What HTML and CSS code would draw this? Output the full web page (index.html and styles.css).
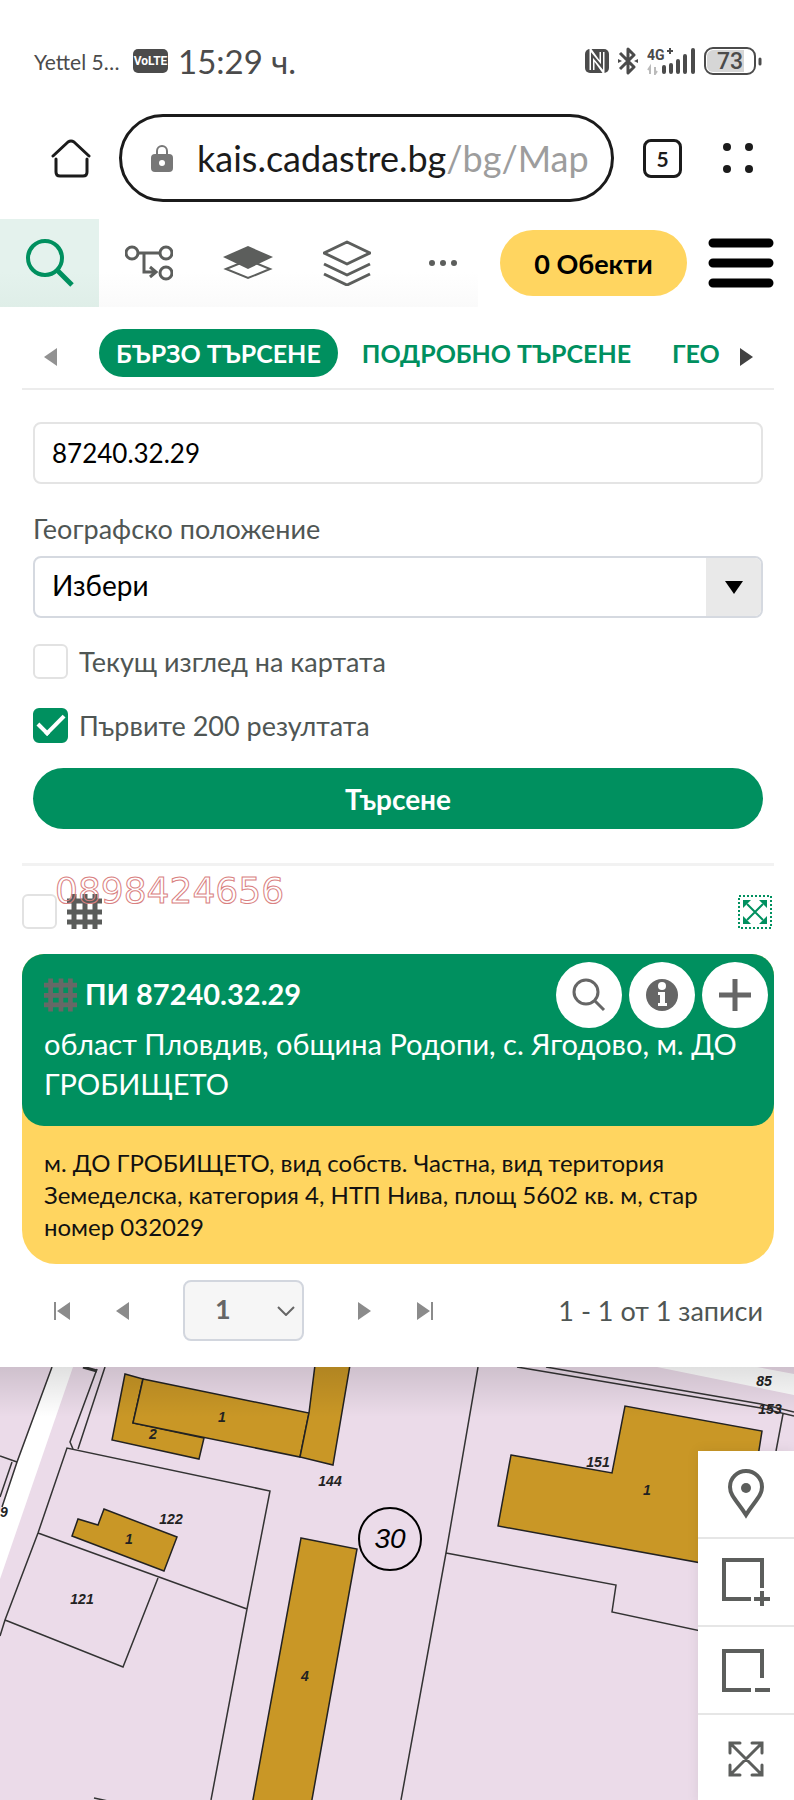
FILE: index.html
```html
<!DOCTYPE html>
<html lang="bg">
<head>
    <meta charset="UTF-8">
    <meta name="viewport" content="width=device-width, initial-scale=1">
    <title>КАИС - Карта</title>
    <link rel="stylesheet" href="styles.css">
</head>
<body>
    <!-- Status bar -->
    <div class="status-bar">
        <span class="carrier">Yettel 5…</span>
        <span class="volte">VoLTE</span>
        <span class="clock">15:29 ч.</span>
        <div class="status-icons">
            <svg width="24" height="26" viewBox="0 0 24 26">
                <rect x="0" y="1" width="24" height="24" rx="5" fill="#4b4b4b"/>
                <path d="M7 22V6l10 14V4" fill="none" stroke="#fff" stroke-width="5"/>
                <path d="M7 24V7l10 12V2" fill="none" stroke="#4b4b4b" stroke-width="2"/>
            </svg>
            <svg width="20" height="28" viewBox="0 0 20 28">
                <path d="M2 6l14 14-6 6V2l6 6L2 22" fill="none" stroke="#4b4b4b" stroke-width="3" stroke-linejoin="round"/>
                <path d="M0 12l4 2-4 2zM20 12l-4 2 4 2z" fill="#4b4b4b"/>
            </svg>
            <svg width="48" height="28" viewBox="0 0 48 28">
                <text x="0" y="13" class="net-label">4G</text>
                <path d="M20 4h6M23 1v6" stroke="#4b4b4b" stroke-width="2"/>
                <path d="M3 27v-7l-2 3M8 20v7l2-3" fill="none" stroke="#bbb" stroke-width="2"/>
                <path d="M17 20v5M24 18v7M31 14v11M38 9v16M46 3v22" stroke="#4b4b4b" stroke-width="4" stroke-linecap="round"/>
            </svg>
            <svg width="58" height="28" viewBox="0 0 58 28">
                <rect x="1" y="1" width="50" height="26" rx="8" fill="#fff" stroke="#4b4b4b" stroke-width="2"/>
                <path d="M9 3h31v22H9a6 6 0 0 1-6-6V9a6 6 0 0 1 6-6z" fill="#d6d6d6"/>
                <path d="M56 12v5" stroke="#4b4b4b" stroke-width="3" stroke-linecap="round"/>
                <text x="26" y="22" text-anchor="middle" class="battery-label">73</text>
            </svg>
        </div>
    </div>

    <!-- Browser bar -->
    <div class="browser-bar">
        <button class="plain" aria-label="Начало">
            <svg width="40" height="40" viewBox="0 0 40 40" fill="none" stroke="#1b1b1b" stroke-width="3" stroke-linecap="round" stroke-linejoin="round">
                <path d="M2 18L17 4q3-2 6 0l15 14M5 21v13q0 4 4 4h23q4 0 4-4V21"/>
            </svg>
        </button>
        <button class="address">
            <svg width="22" height="28" viewBox="0 0 22 28">
                <path d="M6 12V7a5 5 0 0 1 10 0v5" fill="none" stroke="#777" stroke-width="2"/>
                <rect x="0" y="10" width="22" height="18" rx="4" fill="#777"/>
                <circle cx="11" cy="19" r="3" fill="#fff"/>
            </svg>
            <span>kais.cadastre.bg<span class="path">/bg/Map</span></span>
        </button>
        <button class="tab-count">5</button>
        <button class="plain" aria-label="Меню на браузъра">
            <svg width="30" height="30" viewBox="0 0 30 30" fill="#1b1b1b">
                <circle cx="4" cy="4" r="4"/><circle cx="26" cy="4" r="4"/>
                <circle cx="4" cy="26" r="4"/><circle cx="26" cy="26" r="4"/>
            </svg>
        </button>
    </div>

    <!-- Site toolbar -->
    <header class="toolbar">
        <nav class="tools">
            <button class="tool active" aria-label="Търсене">
                <svg width="48" height="48" viewBox="0 0 48 48" fill="none" stroke="#00905f" stroke-width="4">
                    <circle cx="19" cy="19" r="17"/>
                    <path d="M31 31l15 15" stroke-width="5"/>
                </svg>
            </button>
            <button class="tool" aria-label="Маршрут">
                <svg width="48" height="36" viewBox="0 0 48 36" fill="none" stroke="#5c5e5c" stroke-width="3">
                    <circle cx="7" cy="8" r="6"/><circle cx="41" cy="8" r="6"/><circle cx="41" cy="28" r="6"/>
                    <path d="M13 8h22M19 8v19h11M25 22l6 5-6 5"/>
                </svg>
            </button>
            <button class="tool" aria-label="Основна карта">
                <svg width="50" height="34" viewBox="0 0 50 34">
                    <path d="M3 23L25 14l22 9-22 9z" fill="none" stroke="#5c5e5c" stroke-width="2"/>
                    <path d="M0 11L25 0l25 11-25 12z" fill="#5c5e5c"/>
                </svg>
            </button>
            <button class="tool" aria-label="Слоеве">
                <svg width="48" height="46" viewBox="0 0 48 46" fill="none" stroke="#5c5e5c" stroke-width="3" stroke-linejoin="round">
                    <path d="M1 13L24 2l23 11-23 11zM1 24l23 11 23-11M1 34l23 11 23-11"/>
                </svg>
            </button>
            <button class="tool more" aria-label="Още">
                <svg width="30" height="8" viewBox="0 0 30 8" fill="#5c5e5c">
                    <circle cx="4" cy="4" r="3"/><circle cx="15" cy="4" r="3"/><circle cx="26" cy="4" r="3"/>
                </svg>
            </button>
        </nav>
        <button class="objects">0 Обекти</button>
        <button class="plain" aria-label="Меню">
            <svg width="66" height="50" viewBox="0 0 66 50" stroke="#000" stroke-width="9" stroke-linecap="round">
                <path d="M5 5h56M5 25h56M5 45h56"/>
            </svg>
        </button>
    </header>

    <main class="panel">
        <div class="tabs">
            <button class="plain scroll" aria-label="Назад">
                <svg width="13" height="18" viewBox="0 0 13 18"><path d="M13 0v18L0 9z" fill="#929292"/></svg>
            </button>
            <div class="tab-list">
                <button class="tab active">БЪРЗО ТЪРСЕНЕ</button>
                <button class="tab">ПОДРОБНО ТЪРСЕНЕ</button>
                <button class="tab">ГЕО</button>
            </div>
            <button class="plain scroll" aria-label="Напред">
                <svg width="13" height="18" viewBox="0 0 13 18"><path d="M0 0v18l13-9z" fill="#424242"/></svg>
            </button>
        </div>

        <form class="search-form">
            <input type="text" class="field" aria-label="Търсене" value="87240.32.29">
            <label for="location" class="field-label">Географско положение</label>
            <div class="select-wrap">
                <select id="location" class="field">
                    <option>Избери</option>
                </select>
                <span class="select-arrow">
                    <svg width="18" height="13" viewBox="0 0 18 13"><path d="M0 0h18L9 13z"/></svg>
                </span>
            </div>
            <label class="check"><input type="checkbox"> Текущ изглед на картата</label>
            <label class="check"><input type="checkbox" checked> Първите 200 резултата</label>
            <button type="button" class="submit">Търсене</button>
        </form>

        <div class="results-head">
            <input type="checkbox" aria-label="Избери всички">
            <svg width="35" height="35" viewBox="0 0 35 35" stroke="#5a5c5a" stroke-width="5">
                <path d="M7 0v35M18 0v35M28 0v35M0 7h35M0 18h35M0 28h35"/>
            </svg>
            <span class="watermark">0898424656</span>
            <button class="plain extent" aria-label="Покажи всички">
                <svg width="34" height="34" viewBox="0 0 34 34" fill="#00905f" stroke="#00905f">
                    <rect x="1" y="1" width="32" height="32" fill="none" stroke-width="2" stroke-dasharray="2 2"/>
                    <path d="M9 9l16 16M25 9L9 25" stroke-width="2"/>
                    <path d="M5 5h8l-8 8zM29 5v8l-8-8zM5 29v-8l8 8zM29 29h-8l8-8z" stroke="none"/>
                </svg>
            </button>
        </div>

        <article class="result">
            <div class="result-main">
                <div class="result-title">
                    <svg width="33" height="34" viewBox="0 0 35 35" stroke="#666866" stroke-width="5">
                        <path d="M7 0v35M18 0v35M28 0v35M0 7h35M0 18h35M0 28h35"/>
                    </svg>
                    <h2>ПИ 87240.32.29</h2>
                    <div class="result-actions">
                        <button class="round" aria-label="Приближи">
                            <svg width="34" height="34" viewBox="0 0 34 34" fill="none" stroke="#666" stroke-width="3">
                                <circle cx="14" cy="14" r="12"/><path d="M22 22l10 10"/>
                            </svg>
                        </button>
                        <button class="round" aria-label="Информация">
                            <svg width="34" height="34" viewBox="0 0 34 34">
                                <circle cx="17" cy="17" r="16" fill="#666"/>
                                <circle cx="17" cy="8" r="4" fill="#fff"/>
                                <path d="M13 14h7v11h2v3h-9v-3h2v-8h-2z" fill="#fff"/>
                            </svg>
                        </button>
                        <button class="round" aria-label="Добави">
                            <svg width="34" height="34" viewBox="0 0 34 34"><path d="M1 17h32M17 1v32" stroke="#666" stroke-width="5"/></svg>
                        </button>
                    </div>
                </div>
                <p>област Пловдив, община Родопи, с. Ягодово, м. ДО ГРОБИЩЕТО</p>
            </div>
            <p class="result-details">м. ДО ГРОБИЩЕТО, вид собств. Частна, вид територия Земеделска, категория 4, НТП Нива, площ 5602 кв. м, стар номер 032029</p>
        </article>

        <div class="pager">
            <button class="plain" aria-label="Първа">
                <svg width="16" height="18" viewBox="0 0 16 18" fill="#8b8b8b"><path d="M0 0h2v18H0zM16 0v18L3 9z"/></svg>
            </button>
            <button class="plain" aria-label="Предишна">
                <svg width="13" height="18" viewBox="0 0 13 18" fill="#8b8b8b"><path d="M13 0v18L0 9z"/></svg>
            </button>
            <div class="page-select">
                <select aria-label="Страница"><option>1</option></select>
                <svg width="18" height="10" viewBox="0 0 18 10" fill="none" stroke="#666" stroke-width="2"><path d="M1 1l8 8 8-8"/></svg>
            </div>
            <button class="plain" aria-label="Следваща">
                <svg width="13" height="18" viewBox="0 0 13 18" fill="#8b8b8b"><path d="M0 0v18l13-9z"/></svg>
            </button>
            <button class="plain" aria-label="Последна">
                <svg width="16" height="18" viewBox="0 0 16 18" fill="#8b8b8b"><path d="M14 0h2v18h-2zM0 0v18l13-9z"/></svg>
            </button>
            <span class="pager-info">1 - 1 от 1 записи</span>
        </div>
    </main>

    <!-- Cadastral map -->
    <section class="map">
        <svg class="map-canvas" viewBox="0 0 794 433" preserveAspectRatio="xMinYMin slice">
            <!-- roads -->
            <g fill="#fff">
                <path d="M52 0h21L0 212v-67z"/>
                <path d="M657 0h100l37 7v21z"/>
            </g>
            <!-- parcels -->
            <g class="parcels">
                <path d="M52 0L17 95 2 140M0 89l17 6M12 95L0 130"/>
                <path d="M97 2L70 75l3 7M105 0L78 82"/>
                <path d="M83 0l14 4" stroke-width="3"/>
                <path d="M0 269l5-16 33-87 29-85 203 43-23 118-36 191M38 166l209 76M158 211l-35 89L5 253M94 431l14 3"/>
                <path d="M478 0l-32 186-45 247M446 186l170 32-4 27 182 39"/>
                <path d="M517 0l244 41 33 8M546 0l215 37 33 8M783 47l-7 37"/>
            </g>
            <!-- buildings -->
            <g class="buildings">
                <path d="M125 7l-13 66 87 19 5-21-71-15 10-44z"/>
                <path d="M143 12l166 34-9 44-167-34z"/>
                <path d="M315-2l-6 48-9 44 33 8L350-2z"/>
                <path d="M72 169l6-17 20 6 6-16 73 28-13 34z"/>
                <path d="M301 171l56 11-46 256h-59z"/>
                <path d="M511 88l101 18 13-67 137 25-22 139-242-44z"/>
            </g>
            <g class="map-labels">
                <text x="222" y="55">1</text>
                <text x="153" y="72">2</text>
                <text x="330" y="119">144</text>
                <text x="171" y="157">122</text>
                <text x="129" y="177">1</text>
                <text x="82" y="237">121</text>
                <text x="305" y="314">4</text>
                <text x="0" y="150">19</text>
                <text x="764" y="19">85</text>
                <text x="770" y="47">153</text>
                <text x="598" y="100">151</text>
                <text x="647" y="128">1</text>
            </g>
            <circle cx="390" cy="172" r="31" fill="none" stroke="#000" stroke-width="2"/>
            <text x="390" y="181" class="quarter">30</text>
        </svg>
        <div class="map-tools">
            <button aria-label="Местоположение">
                <svg width="36" height="50" viewBox="0 0 36 50">
                    <path d="M18 46C10 33 2 27 2 18a16 16 0 0 1 32 0c0 9-8 15-16 28z" fill="none" stroke="#5c5e5c" stroke-width="4"/>
                    <circle cx="18" cy="19" r="5" fill="#5c5e5c"/>
                </svg>
            </button>
            <button aria-label="Приближаване">
                <svg width="48" height="48" viewBox="0 0 48 48" fill="none" stroke="#5c5e5c" stroke-width="4">
                    <path d="M29 41H2V2h38v28M40 33v15M32 41h16"/>
                </svg>
            </button>
            <button aria-label="Отдалечаване">
                <svg width="48" height="48" viewBox="0 0 48 48" fill="none" stroke="#5c5e5c" stroke-width="4">
                    <path d="M29 44H2V5h38v27M33 44h15"/>
                </svg>
            </button>
            <button aria-label="Цял екран">
                <svg width="36" height="36" viewBox="0 0 36 36" fill="none" stroke="#5c5e5c" stroke-width="3" stroke-linecap="round">
                    <path d="M2 12V2h10M24 2h10v10M34 24v10H24M12 34H2V24M2 2l32 32M34 2L2 34"/>
                </svg>
            </button>
        </div>
    </section>
</body>
</html>
```

FILE: styles.css
```css
* { box-sizing: border-box; }
body {
    margin: 0;
    min-height: 100vh;
    display: flex;
    flex-direction: column;
    background: #fff;
    color: #4f5654;
    font-family: Lato, "Noto Sans", sans-serif;
    font-size: 27px;
}
button, input, select { font-family: inherit; font-size: inherit; color: inherit; }
button { border: none; background: none; padding: 0; cursor: pointer; }
svg { display: block; flex: none; }
p, h2 { margin: 0; }
.plain { display: flex; }

/* Status bar */
.status-bar {
    display: flex;
    align-items: center;
    height: 114px;
    padding: 8px 32px 0 34px;
    color: #4b4b4b;
}
.carrier { font-size: 21px; width: 99px; }
.volte {
    width: 35px;
    height: 24px;
    border-radius: 5px;
    background: #4b4b4b;
    color: #fff;
    font: bold 12px/24px Roboto, sans-serif;
    text-align: center;
}
.clock { font-size: 33px; margin-left: 10px; }
.status-icons { display: flex; align-items: center; gap: 9px; margin-left: auto; }
.net-label { font: bold 14px Roboto, sans-serif; fill: #4b4b4b; }
.battery-label { font: 500 23px Roboto, sans-serif; fill: #4b4b4b; }

/* Browser bar */
.browser-bar {
    display: flex;
    align-items: center;
    height: 88px;
    padding: 0 41px 0 51px;
    color: #1b1b1b;
}
.address {
    flex: 1;
    height: 88px;
    margin: 0 29px 0 28px;
    padding-left: 29px;
    display: flex;
    align-items: center;
    gap: 24px;
    border: 3px solid #1b1b1b;
    border-radius: 44px;
    font-size: 36px;
    white-space: nowrap;
}
.address .path { color: #9d9d9d; }
.tab-count {
    width: 39px;
    height: 39px;
    margin-right: 41px;
    border: 3px solid #1b1b1b;
    border-radius: 8px;
    font-size: 21px;
    font-weight: bold;
}

/* Site toolbar */
.toolbar {
    display: flex;
    align-items: center;
    height: 88px;
    margin-top: 17px;
    padding-right: 20px;
}
.tools {
    display: flex;
    width: 478px;
    height: 88px;
    background: linear-gradient(#fff 60%, #fafafa);
}
.tool {
    flex: 0 0 99px;
    display: flex;
    align-items: center;
    justify-content: center;
}
.tool.active { background: linear-gradient(#e4f2ed 60%, #dfeee8); }
.tool.more { flex: 1; padding-left: 12px; }
.objects {
    height: 66px;
    width: 187px;
    margin: 0 auto 0 22px;
    border-radius: 33px;
    background: #ffd560;
    color: #000;
    font-weight: bold;
}

/* Search panel */
.panel { padding: 0 20px 26px 22px; }
.tabs {
    display: flex;
    align-items: center;
    height: 83px;
    padding: 11px 21px 0 22px;
    border-bottom: 2px solid #ececec;
}
.scroll { margin-top: 8px; }
.tab-list {
    flex: 1;
    display: flex;
    gap: 7px;
    margin: 0 18px 0 42px;
    overflow: hidden;
}
.tab {
    flex: none;
    height: 48px;
    padding: 0 17px;
    border-radius: 24px;
    color: #00905f;
    font-size: 25px;
    font-weight: bold;
    white-space: nowrap;
}
.tab.active { background: #00905f; color: #fff; }

.search-form {
    display: flex;
    flex-direction: column;
    padding: 32px 11px 34px;
    border-bottom: 3px solid #f2f2f2;
}
.field {
    width: 100%;
    height: 62px;
    padding: 0 17px;
    border: 2px solid #e4e4e4;
    border-radius: 8px;
    background: #fff;
    color: #000;
    font-size: 26px;
    appearance: none;
}
.field-label { margin-top: 27px; line-height: 36px; margin-bottom: 9px; }
.select-wrap { position: relative; margin-bottom: 25px; }
select.field { border-color: #d5d9e0; font-size: 28px; padding-bottom: 4px; }
.select-arrow {
    position: absolute;
    right: 2px;
    top: 2px;
    bottom: 2px;
    width: 55px;
    display: flex;
    align-items: center;
    justify-content: center;
    border-radius: 0 6px 6px 0;
    background: #e9e9e9;
    pointer-events: none;
}
.check {
    display: flex;
    align-items: center;
    gap: 11px;
    height: 36px;
    margin-bottom: 28px;
}
input[type="checkbox"] {
    appearance: none;
    flex: none;
    display: flex;
    align-items: center;
    justify-content: center;
    width: 35px;
    height: 35px;
    margin: 0;
    border: 2px solid #e2e2e2;
    border-radius: 6px;
    background: #fff;
}
input[type="checkbox"]:checked { background: #00905f; border-color: #00905f; }
input[type="checkbox"]:checked::after {
    content: "";
    width: 22px;
    height: 11px;
    margin-bottom: 8px;
    border: solid #fff;
    border-width: 0 0 4px 4px;
    transform: rotate(-45deg);
}
.submit {
    height: 61px;
    margin-top: -3px;
    border-radius: 31px;
    background: #00905f;
    color: #fff;
    font-size: 28px;
    font-weight: bold;
}

/* Results */
.results-head {
    position: relative;
    display: flex;
    align-items: center;
    gap: 10px;
    height: 88px;
    padding: 3px 2px 0 0;
}
.watermark {
    position: absolute;
    left: 33px;
    top: 4px;
    color: transparent;
    font: 36px/42px "DejaVu Sans", sans-serif;
    -webkit-text-stroke: 1px #d98080;
}
.extent { margin-left: auto; }
.result { border-radius: 22px 22px 34px 34px; background: #ffd560; }
.result-main {
    height: 172px;
    padding: 8px 6px 0 22px;
    border-radius: 22px;
    background: #00905f;
    color: #fff;
}
.result-title { display: flex; align-items: center; height: 66px; }
.result-title h2 { margin-left: 8px; padding-bottom: 4px; font-size: 29px; }
.result-main p { font-size: 29px; line-height: 40px; margin-top: -4px; }
.result-actions { display: flex; gap: 7px; margin-left: auto; }
.round {
    display: flex;
    align-items: center;
    justify-content: center;
    width: 66px;
    height: 66px;
    border-radius: 50%;
    background: #fff;
}
.result-details {
    padding: 21px 22px;
    color: #111;
    font-size: 24px;
    line-height: 32px;
}

/* Pager */
.pager {
    display: flex;
    align-items: center;
    gap: 46px;
    padding: 16px 11px 0 32px;
}
.page-select { position: relative; width: 121px; margin: 0 8px; }
.page-select select {
    width: 100%;
    height: 61px;
    padding: 0 30px 4px;
    border: 2px solid #d2d6de;
    border-radius: 8px;
    background: #f6f6f6;
    color: #666;
    font-weight: bold;
    appearance: none;
}
.page-select svg { position: absolute; right: 9px; top: 26px; pointer-events: none; }
.pager-info { margin-left: auto; }

/* Map */
.map {
    position: relative;
    flex: 1;
    min-height: 433px;
    background: #ebdbe9;
    overflow: hidden;
}
.map::before {
    content: "";
    position: absolute;
    inset: 0 0 auto;
    height: 50px;
    background: linear-gradient(rgba(0,0,0,0.12), rgba(0,0,0,0));
}
.map-canvas { width: 100%; height: 100%; }
.parcels { fill: none; stroke: #333; stroke-width: 1.5; }
.buildings { fill: #c99726; stroke: #222; stroke-width: 1.5; }
.map-labels {
    font: italic bold 14px "Liberation Sans", Arial, sans-serif;
    text-anchor: middle;
    fill: #222;
}
.quarter { font: italic 28px "Liberation Sans", Arial, sans-serif; text-anchor: middle; }
.map-tools {
    position: absolute;
    right: 0;
    top: 84px;
    width: 96px;
    background: #fff;
    box-shadow: 0 0 12px rgba(0,0,0,0.08);
}
.map-tools button {
    display: flex;
    align-items: center;
    justify-content: center;
    width: 100%;
    height: 88px;
    border-bottom: 2px solid #e6e6e6;
}
.map-tools button:last-child { border-bottom: none; }
```
